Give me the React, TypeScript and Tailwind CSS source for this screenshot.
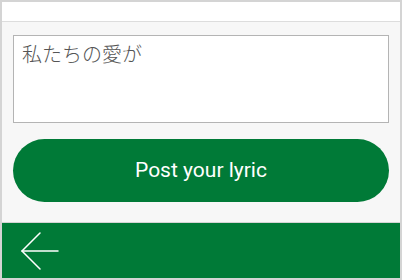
export default function App() {
  return (
    <div className="w-[402px] h-[280px] flex flex-col border-2 border-[#d4d4d4] bg-[#f7f7f7] overflow-hidden">
      {/* top bar */}
      <div className="h-[20px] bg-white border-b border-[#dddddd] shrink-0" />

      {/* form */}
      <div className="flex-1 flex flex-col px-[11px] pt-[13px]">
        <div className="h-[88px] bg-white border border-[#b4b4b4] px-[8px] pt-[4px]">
          <p className="text-[20px] leading-[28px] font-light text-[#555555] font-['Noto_Sans_CJK_JP',sans-serif]">
            私たちの愛が
          </p>
        </div>
        <button className="mt-[16px] h-[63px] w-full rounded-full bg-[#007a37] text-white text-[21px] font-['Roboto',sans-serif]">
          Post your lyric
        </button>
      </div>

      {/* bottom bar */}
      <div className="h-[56px] shrink-0 bg-[#007a37] border-t border-[#d4d4d4] flex items-center px-[18px]">
        <svg width="40" height="38" viewBox="0 0 40 38" fill="none" stroke="#ffffff" strokeWidth={1.5} strokeLinecap="round">
          <line x1="2" y1="19" x2="38" y2="19" />
          <polyline points="20,1 2,19 20,37" />
        </svg>
      </div>
    </div>
  );
}
